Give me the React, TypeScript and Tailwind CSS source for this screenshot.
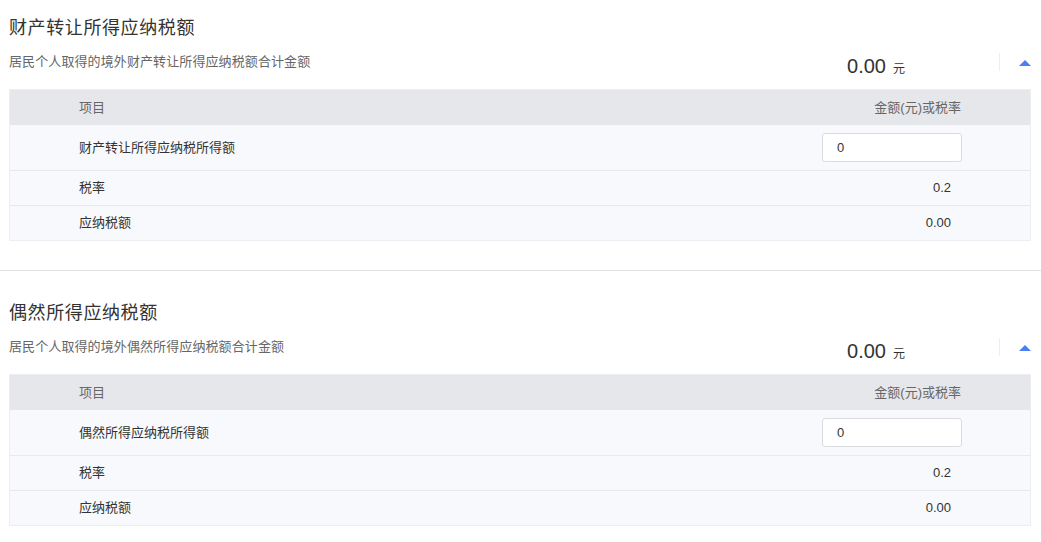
import React from 'react';

interface TaxSectionProps {
  title: string;
  subtitle: string;
  incomeLabel: string;
}

function TaxSection({ title, subtitle, incomeLabel }: TaxSectionProps) {
  return (
    <div className="pl-[9px] pr-[10px]">
      <h2 className="text-[18px] leading-[26px] tracking-[0.6px] text-[#333] font-normal">{title}</h2>
      <div className="mt-[11px] flex items-center justify-between h-[20px]">
        <p className="text-[13px] leading-[20px] tracking-[0.1px] text-[#666]">{subtitle}</p>
        <div className="flex items-center">
          <div className="flex items-baseline mt-[7px]">
            <span className="text-[20px] leading-[28px] text-[#333]">0.00</span>
            <span className="ml-[7px] text-[12px] text-[#333]">元</span>
          </div>
          <div className="ml-[94px] w-px h-[18px] bg-[#eeeeee]" />
          <div className="ml-[19px] w-0 h-0 border-l-[6px] border-r-[6px] border-b-[6px] border-l-transparent border-r-transparent border-b-[#4a7ef3] mt-[1px]" />
        </div>
      </div>

      <div className="mt-[17px] border border-[#eceef3] text-[13px]">
        <div className="flex items-center h-[35px] bg-[#e6e7eb] text-[#666]">
          <div className="flex-1 pl-[69px]">项目</div>
          <div className="pr-[69px]">金额(元)或税率</div>
        </div>
        <div className="flex items-center h-[46px] bg-[#f8f9fc] text-[#333] border-b border-[#e8e9ef]">
          <div className="flex-1 pl-[69px]">{incomeLabel}</div>
          <div className="pr-[68px]">
            <input
              type="text"
              defaultValue="0"
              className="w-[140px] h-[29px] rounded-[3px] border border-[#d9dbe0] bg-white px-[14px] text-[13px] text-[#333] outline-none"
            />
          </div>
        </div>
        <div className="flex items-center h-[35px] bg-[#f8f9fc] text-[#333] border-b border-[#e8e9ef]">
          <div className="flex-1 pl-[69px]">税率</div>
          <div className="pr-[79px]">0.2</div>
        </div>
        <div className="flex items-center h-[34px] bg-[#f8f9fc] text-[#333]">
          <div className="flex-1 pl-[69px]">应纳税额</div>
          <div className="pr-[79px]">0.00</div>
        </div>
      </div>
    </div>
  );
}

export default function App() {
  return (
    <div
      className="w-[1041px] h-[542px] bg-white overflow-hidden"
      style={{ fontFamily: '"Liberation Sans", "Noto Sans CJK SC", sans-serif' }}
    >
      <div className="pt-[15px]">
        <TaxSection
          title="财产转让所得应纳税额"
          subtitle="居民个人取得的境外财产转让所得应纳税额合计金额"
          incomeLabel="财产转让所得应纳税所得额"
        />
      </div>
      <div className="mt-[29px] h-px bg-[#e3e3e3]" />
      <div className="pt-[29px]">
        <TaxSection
          title="偶然所得应纳税额"
          subtitle="居民个人取得的境外偶然所得应纳税额合计金额"
          incomeLabel="偶然所得应纳税所得额"
        />
      </div>
    </div>
  );
}
